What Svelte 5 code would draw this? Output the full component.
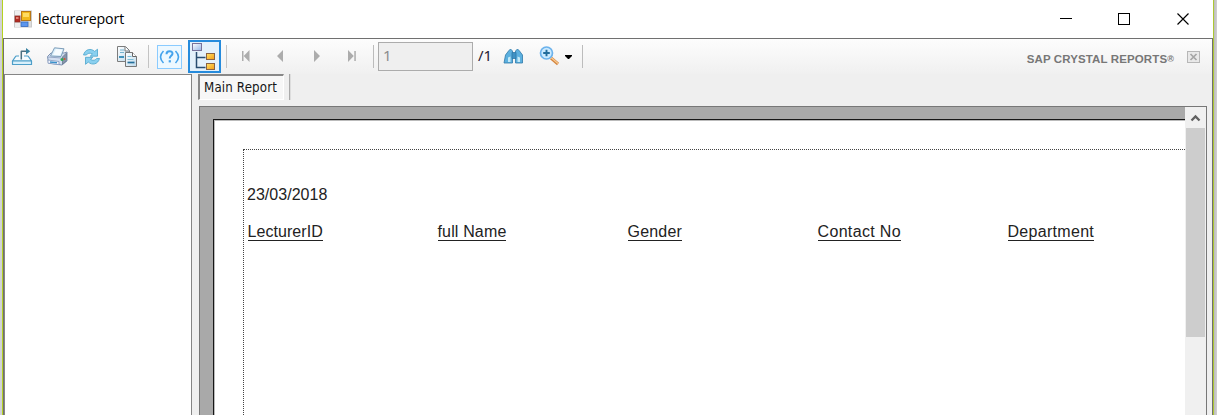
<script>
  const columns = [
    { label: 'LecturerID', spacing: 0.06 },
    { label: 'full Name', spacing: 0.15 },
    { label: 'Gender', spacing: 0.2 },
    { label: 'Contact No', spacing: 0.34 },
    { label: 'Department', spacing: 0.3 }
  ];
</script>

<div class="screen">
  <div class="edge left"></div>
  <main class="window">
    <header class="titlebar">
      <svg class="appicon" width="18" height="18" viewBox="0 0 18 18">
        <rect x=".5" y="1" width="17" height="16" fill="#ddd" stroke="#c9c9c9" />
        <path d="M1 1h6v4H1zM1 13h6v4H1z" fill="#eee" />
        <rect x="1" y="6" width="5" height="6" fill="#b42b22" stroke="#8b2b24" stroke-width=".7" />
        <rect x="2" y="7" width="2.5" height="2" fill="#e28172" />
        <rect x="7.5" y="1.5" width="9" height="9" fill="#f2b91c" stroke="#b87818" />
        <path d="M9 3h6v4H9z" fill="#ffdc62" />
        <rect x="7" y="12" width="7" height="4.5" fill="#5c96ed" stroke="#3669bd" stroke-width=".8" />
      </svg>
      <span class="title">lecturereport</span>
      <svg class="controls" width="132" height="16" viewBox="0 0 132 16" shape-rendering="crispEdges">
        <path d="M0 7.5h12" stroke="#000" />
        <rect x="58.5" y="2.5" width="11" height="11" fill="none" stroke="#000" />
        <path d="M117.5 2.5l11 11m0-11l-11 11" stroke="#000" stroke-width="1.15" shape-rendering="auto" />
      </svg>
    </header>

    <div class="viewer">
      <nav class="toolbar">
        <svg width="374" height="35" viewBox="0 0 374 35">
          <defs>
            <linearGradient id="blueBox" x2="1" y2="1"><stop stop-color="#fff" /><stop offset="1" stop-color="#94b5e6" /></linearGradient>
            <linearGradient id="goldBox" x2="1" y2="1"><stop stop-color="#ffe36b" /><stop offset="1" stop-color="#f59a10" /></linearGradient>
            <linearGradient id="paper" x2="1" y2="1"><stop stop-color="#fff" /><stop offset="1" stop-color="#bdd9eb" /></linearGradient>
          </defs>
          <g fill="none" stroke="#4d9ec8" stroke-width="1.2" stroke-linejoin="round">
            <path d="M15 17h-2.5q-.8 0-1.2.8L8.5 22h19l-2.8-4.2q-.4-.8-1.2-.8H20" fill="#f5fbfe" />
            <path d="M8.5 22h19v3.5h-19z" fill="#d9f0fb" />
            <path d="M17.3 20.5v-8.2h5.5" stroke="#4c6f80" stroke-width="1.5" />
            <path d="M22 9l4.2 3.3-4.2 3.3z" fill="#3a83a2" stroke="none" />
          </g>
          <g stroke-linejoin="round">
            <path d="M43.5 17.5l3.5-3.5h13l3-1v9l-5 4-13.5-2z" fill="#d3dff1" stroke="#7d92b2" />
            <path d="M58.5 18l4-4v7.5l-4 4z" fill="#8794aa" stroke="#75859c" />
            <path d="M46.5 17l4-8.2 9.5 1-3 7.7z" fill="#d9effb" stroke="#7e9db9" />
            <path d="M49 16l3-6 6.3.7-2.2 5.6z" fill="#f7fcff" />
            <path d="M44 18l13.5 1" stroke="#95a8c7" />
            <path d="M44 21l11 1.5v3.2L44 24.2z" fill="#f2f6fd" stroke="#8096bb" stroke-width=".8" />
            <path d="M46 23l7 .8" stroke="#3991cb" stroke-width="1.5" />
            <circle cx="58" cy="20.5" r="1.5" fill="#31a857" /><circle cx="60.5" cy="20" r="1.1" fill="#c95a32" />
          </g>
          <g fill="#8ad0ef" stroke="#4ba5cb" stroke-width=".8" stroke-linejoin="round">
            <path d="M79.5 16c1.5-6 7.5-7 11.2-3.6l2.8-2.2v7h-7.3l2.2-2.2c-2.6-1.4-4.8-.9-6 1z" />
            <path d="M95.5 19.5c-1.5 6-7.5 7-11.2 3.6l-2.8 2.2v-7h7.3l-2.2 2.2c2.6 1.4 4.8.9 6-1z" />
          </g>
          <g stroke-linejoin="round">
            <path d="M113.5 7.5h8l4 4v11h-12z" fill="url(#paper)" stroke="#7c7c7c" />
            <path d="M116 11h4m-4 2.5h4" stroke="#75b3ce" /><path d="M115 18h5" stroke="#2683b2" stroke-width="1.7" />
            <path d="M121 8v4h4" fill="#fff" stroke="#777" />
            <path d="M121.5 13.5h7l4 4v10h-11z" fill="url(#paper)" stroke="#777" />
            <path d="M128.5 13.5v4h4" fill="#fff" stroke="#666" />
            <path d="M123.5 17.5h4m-4 3h6" stroke="#7fbfd8" /><path d="M123.5 23.5h7" stroke="#246f9b" stroke-width="1.7" />
          </g>
          <path d="M144.5 6v23" stroke="#c3c3c3" />
          <rect x="153.5" y="6.5" width="24" height="23" fill="#edf8ff" stroke="#8acbff" />
          <g fill="none" stroke="#45a3ec" stroke-width="1.6">
            <path d="M159.5 12q-6 6 0 12m12-12q6 6 0 12" />
            <path d="M162.5 15.2c0-4 6.2-3.8 6-.5-.2 2.2-2.8 2.2-2.8 4.8" stroke-width="2" /><path d="M164.7 22.3h2.2" stroke-width="2.2" />
          </g>
          <rect x="185" y="2" width="31" height="31" fill="#e4f1fb" stroke="#268bdc" stroke-width="2" />
          <path d="M192.5 13v15.5h9m-9-10h9" fill="none" stroke="#294d70" stroke-width="1.5" />
          <rect x="188.5" y="4.5" width="9" height="7" fill="url(#blueBox)" stroke="#77729a" />
          <rect x="202.5" y="14.5" width="8" height="6" fill="url(#goldBox)" stroke="#8a6343" />
          <rect x="202.5" y="24.5" width="8" height="6" fill="url(#goldBox)" stroke="#8a6343" />
          <path d="M222.5 6v23" stroke="#c6c6c6" />
          <g fill="#acacac">
            <path d="M238 12h1.5v10H238zM245.5 11v12l-5.8-6z" />
            <path d="M279 11v12l-6-6zM310 11v12l6-6z" />
            <path d="M344 11v12l5.8-6zM350.3 12h1.5v10h-1.5z" />
          </g>
          <path d="M369.5 6v23" stroke="#bcbcbc" />
        </svg>
        <span class="page-input">1</span>
        <span class="total">/1</span>
        <svg class="tools" width="85" height="35" viewBox="0 0 85 35">
          <g stroke="#2f78a8" stroke-width=".8" stroke-linejoin="round">
            <path d="M7.5 12l2-2 2 2v12H3l1.5-8zM14.5 12l2-2 2 2 3 4v8h-7z" fill="#5cb0df" />
            <path d="M11 13.5h4v6h-4z" fill="#3e91c4" />
            <path d="M7 18.5v4.5h2.5v-5.5M19 18.5v4.5h-2.5v-5.5" fill="#c3e9f8" stroke="none" />
          </g>
          <path d="M50 19l7 6" stroke="#d3843e" stroke-width="3" />
          <path d="M50 18.5l7 6" stroke="#f8c990" stroke-width="1.4" />
          <circle cx="45.5" cy="14" r="6" fill="#cbeaff" stroke="#6bb2ec" stroke-width="1.7" />
          <path d="M42.2 14h6.6m-3.3-3.3v6.6" stroke="#236d9c" stroke-width="1.9" />
          <path d="M64 16h7v1l-3 3h-1l-3-3z" fill="#000" />
          <path d="M81.5 6v23" stroke="#bcbcbc" />
        </svg>
        <span class="brand">SAP CRYSTAL REPORTS<small>®</small></span>
        <svg class="close" width="13" height="12" viewBox="0 0 13 12">
          <rect x=".5" y=".5" width="12" height="11" fill="#e9e9e9" stroke="#b7b7b7" />
          <path d="M3.5 3l6 6m0-6l-6 6" stroke="#a5a5a5" stroke-width="1.7" />
        </svg>
      </nav>

      <div class="workspace">
        <aside class="group-tree"></aside>
        <section class="report-area">
          <div class="tabs"><button class="tab"><span>Main Report</span></button><i></i></div>
          <div class="report-frame">
            <div class="canvas">
              <article class="page">
                <div class="print-area">
                  <time>23/03/2018</time>
                  <div class="columns">
                    {#each columns as column}
                      <div><span style="letter-spacing: {column.spacing}px">{column.label}</span></div>
                    {/each}
                  </div>
                </div>
              </article>
            </div>
            <div class="scrollbar">
              <svg width="20" height="21" viewBox="0 0 20 21"><path d="M5.5 13.5l4-4 4 4" fill="none" stroke="#606060" stroke-width="2.3" /></svg>
              <div class="thumb"></div>
            </div>
          </div>
        </section>
      </div>
    </div>
  </main>
  <div class="edge right"></div>
</div>

<style>
  :global(body) { margin: 0; overflow: hidden; }
  * { box-sizing: border-box; }
  .screen { width: 1217px; height: 415px; display: flex; background: #fff; font-family: "Liberation Sans", Arial, sans-serif; overflow: hidden; }
  .edge { flex: none; }
  .left { width: 3px; background: #d2d2d5; border-right: 1px solid #b5d220; }
  .right { width: 4px; background: linear-gradient(90deg, #bcbcbc, #d2d2d2); border-left: 1px solid #adc832; }
  .window { width: 1210px; display: flex; flex-direction: column; }
  .titlebar { height: 38px; flex: none; display: flex; align-items: center; padding: 0 21px 0 11px; background: #fff; }
  .appicon { margin-right: 6px; }
  .title { font: 14.2px/20px "Open Sans", sans-serif; color: #000; letter-spacing: -.12px; }
  .controls { margin-left: auto; }
  .viewer { flex: 1; min-height: 0; display: flex; flex-direction: column; border: solid #707070; border-width: 1px 1px 0; background: #efefef; }
  .toolbar { height: 35px; flex: none; display: flex; background: linear-gradient(#fdfdfd, #f0f0f0); }
  .toolbar svg { flex: none; }
  .page-input { width: 95px; height: 29px; margin-top: 3px; padding: 2px 4px; flex: none; border: 1px solid #acacac; background: #efefef; color: #8c8c8c; font: 15px/20px "Noto Sans", sans-serif; }
  .total { width: 28px; flex: none; padding: 6px 0 0 5px; font: 15px/20px "Noto Sans", sans-serif; color: #252033; }
  .brand { margin: 12px 0 0 auto; font: bold 11.5px/16px "Liberation Sans", sans-serif; color: #777; white-space: nowrap; letter-spacing: .12px; }
  .brand small { font-size: 9px; vertical-align: 1px; }
  .toolbar .close { margin: 12px 12px 0 13px; }
  .workspace { display: flex; flex: 1; min-height: 0; }
  .group-tree { width: 188px; flex: none; background: #fff; border: solid #858585; border-width: 1px 1px 0; }
  .report-area { flex: 1; min-width: 0; padding: 0 5px 0 6px; display: flex; flex-direction: column; }
  .tabs { height: 32px; flex: none; display: flex; }
  .tab { width: 86px; height: 26px; margin: 0; padding: 0 0 0 4px; text-align: left; color: #161616; background: #f7f7f7; border: solid; border-width: 2px 1px 1px 2px; border-color: #888 #fff #fff #888; font: 13.2px/24px "DejaVu Sans Condensed", "DejaVu Sans", sans-serif; white-space: nowrap; letter-spacing: .15px; }
  .tabs i { width: 2px; height: 26px; margin-left: 5px; border-left: 1px solid #aaa; border-right: 1px solid #ddd; }
  .report-frame { margin-left: 1px; flex: 1; min-height: 0; display: flex; border: solid #777; border-width: 1px 1px 0; }
  .canvas { flex: 1; min-width: 0; padding: 12px 0 0 13px; background: #a9a9a9; }
  .page { height: 300px; border: solid #171717; border-width: 1px 0 0 1px; box-shadow: inset 1px 1px #bbb; background: #fff; padding: 29px 0 0 29px; }
  .print-area { height: 270px; border: dotted #444; border-width: 1px 0 0 1px; padding: 35px 0 0 3px; color: #222; font-size: 16px; line-height: 19px; }
  time { display: block; letter-spacing: .03px; }
  .columns { margin-top: 18px; padding-left: .5px; display: grid; grid-template-columns: repeat(5, 190px); }
  .columns span { display: inline-block; height: 18px; border-bottom: 1px solid #222; line-height: 18px; }
  .scrollbar { width: 21px; flex: none; padding: 0 1px; background: #f0f0f0; }
  .scrollbar svg { display: block; }
  .thumb { height: 209px; background: #cdcdcd; }
</style>
